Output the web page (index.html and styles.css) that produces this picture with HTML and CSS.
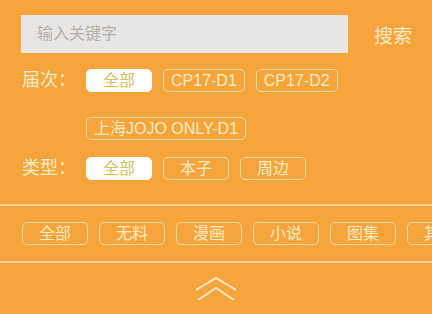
FILE: index.html
```html
<!DOCTYPE html>
<html lang="zh">
<head>
<meta charset="utf-8">
<link rel="stylesheet" href="styles.css">
</head>
<body>
<div class="panel">
  <div class="search-row">
    <div class="search-input">输入关键字</div>
    <div class="search-btn">搜索</div>
  </div>
  <div class="filter first">
    <div class="label">届次：</div>
    <div class="pills wrap">
      <span class="pill on">全部</span>
      <span class="pill">CP17-D1</span>
      <span class="pill">CP17-D2</span>
      <span class="pill">上海JOJO ONLY-D1</span>
    </div>
  </div>
  <div class="filter second">
    <div class="label">类型：</div>
    <div class="pills">
      <span class="pill on">全部</span>
      <span class="pill">本子</span>
      <span class="pill">周边</span>
    </div>
  </div>
  <div class="divider"></div>
  <div class="tags">
    <span class="pill">全部</span>
    <span class="pill">无料</span>
    <span class="pill">漫画</span>
    <span class="pill">小说</span>
    <span class="pill">图集</span>
    <span class="pill">其他</span>
  </div>
  <div class="divider"></div>
  <div class="collapse">
    <svg width="44" height="26" viewBox="0 0 44 26">
      <polyline points="2,14 22,2 42,14" fill="none" stroke="#fde9c4" stroke-width="2"/>
      <polyline points="4,24 22,12 40,24" fill="none" stroke="#fde9c4" stroke-width="2"/>
    </svg>
  </div>
</div>
</body>
</html>
```

FILE: styles.css
```css
html, body {
  margin: 0;
  padding: 0;
  background: #f5a53b;
}
body {
  width: 432px;
  height: 314px;
  overflow: hidden;
  font-family: "Liberation Sans", "Noto Sans CJK SC", sans-serif;
  color: #fde9c4;
}
.panel {
  display: flex;
  flex-direction: column;
}
.search-row {
  display: flex;
  align-items: center;
  padding: 15px 0 0 21px;
}
.search-input {
  width: 311px;
  height: 38px;
  background: #e7e6e5;
  color: #b2b0ae;
  font-size: 16px;
  line-height: 38px;
  padding-left: 16px;
}
.search-btn {
  margin-left: 26px;
  font-size: 19px;
  color: #fde9c4;
}
.filter {
  display: flex;
  align-items: flex-start;
  padding-left: 22px;
}
.filter.first {
  margin-top: 16px;
}
.filter.second {
  margin-top: 17px;
}
.label {
  width: 64px;
  font-size: 18px;
  line-height: 23px;
  flex: none;
  color: #fdebc9;
}
.pills {
  display: flex;
  flex-wrap: wrap;
  column-gap: 11px;
  row-gap: 25px;
  width: 290px;
}
.pill {
  box-sizing: border-box;
  min-width: 66px;
  height: 23px;
  padding: 0 7px;
  border: 1px solid #fbd9a0;
  border-radius: 5px;
  font-size: 16px;
  line-height: 21px;
  text-align: center;
  color: #fde9c4;
  flex: none;
}
.pill.on {
  background: #ffffff;
  border-color: #ffffff;
  color: #d6c05e;
}
.divider {
  height: 2px;
  background: #f9d49a;
  margin-top: 24px;
}
.tags {
  display: flex;
  column-gap: 11px;
  padding-left: 22px;
  padding-top: 16px;
  overflow: hidden;
  white-space: nowrap;
}
.tags + .divider {
  margin-top: 16px;
}
.collapse {
  display: flex;
  justify-content: center;
  padding-top: 13px;
}
```
